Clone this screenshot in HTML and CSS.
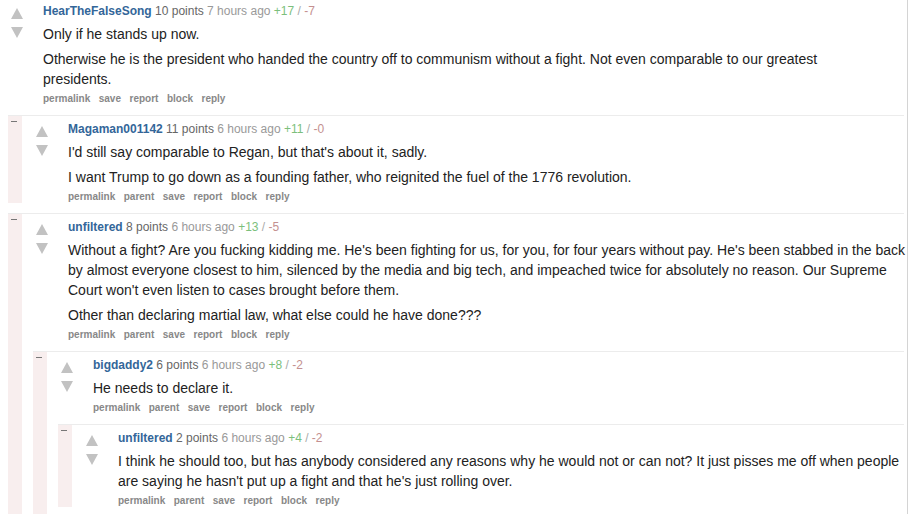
FILE: index.html
```html
<!DOCTYPE html>
<html>
<head>
<meta charset="utf-8">
<link rel="stylesheet" href="styles.css">
</head>
<body>
<div class="page">
  <div class="thread">
    <div class="comment">
      <div class="bar"></div>
      <div class="main">
        <div class="entry">
          <div class="arrows"><span class="up"></span><span class="down"></span></div>
          <div class="content">
            <p class="tagline"><a class="author">HearTheFalseSong</a> <span class="score">10 points</span> <span class="time">7 hours ago</span> <span class="split"><span class="plus">+17</span> / <span class="minus">-7</span></span></p>
            <div class="md">
              <p>Only if he stands up now.</p>
              <p>Otherwise he is the president who handed the country off to communism without a fight. Not even comparable to our greatest presidents.</p>
            </div>
            <ul class="buttons"><li>permalink</li><li>save</li><li>report</li><li>block</li><li>reply</li></ul>
          </div>
        </div>
        <div class="children">
          <div class="comment">
            <div class="bar"></div>
            <div class="main">
              <div class="entry">
                <div class="arrows"><span class="up"></span><span class="down"></span></div>
                <div class="content">
                  <p class="tagline"><a class="author">Magaman001142</a> <span class="score">11 points</span> <span class="time">6 hours ago</span> <span class="split"><span class="plus">+11</span> / <span class="minus">-0</span></span></p>
                  <div class="md">
                    <p>I'd still say comparable to Regan, but that's about it, sadly.</p>
                    <p>I want Trump to go down as a founding father, who reignited the fuel of the 1776 revolution.</p>
                  </div>
                  <ul class="buttons"><li>permalink</li><li>parent</li><li>save</li><li>report</li><li>block</li><li>reply</li></ul>
                </div>
              </div>
            </div>
          </div>
          <div class="comment">
            <div class="bar"></div>
            <div class="main">
              <div class="entry">
                <div class="arrows"><span class="up"></span><span class="down"></span></div>
                <div class="content">
                  <p class="tagline"><a class="author">unfiltered</a> <span class="score">8 points</span> <span class="time">6 hours ago</span> <span class="split"><span class="plus">+13</span> / <span class="minus">-5</span></span></p>
                  <div class="md">
                    <p>Without a fight? Are you fucking kidding me. He's been fighting for us, for you, for four years without pay. He's been stabbed in the back by almost everyone closest to him, silenced by the media and big tech, and impeached twice for absolutely no reason. Our Supreme Court won't even listen to cases brought before them.</p>
                    <p>Other than declaring martial law, what else could he have done???</p>
                  </div>
                  <ul class="buttons"><li>permalink</li><li>parent</li><li>save</li><li>report</li><li>block</li><li>reply</li></ul>
                </div>
              </div>
              <div class="children">
                <div class="comment">
                  <div class="bar"></div>
                  <div class="main">
                    <div class="entry">
                      <div class="arrows"><span class="up"></span><span class="down"></span></div>
                      <div class="content">
                        <p class="tagline"><a class="author">bigdaddy2</a> <span class="score">6 points</span> <span class="time">6 hours ago</span> <span class="split"><span class="plus">+8</span> / <span class="minus">-2</span></span></p>
                        <div class="md">
                          <p>He needs to declare it.</p>
                        </div>
                        <ul class="buttons"><li>permalink</li><li>parent</li><li>save</li><li>report</li><li>block</li><li>reply</li></ul>
                      </div>
                    </div>
                    <div class="children">
                      <div class="comment">
                        <div class="bar"></div>
                        <div class="main">
                          <div class="entry">
                            <div class="arrows"><span class="up"></span><span class="down"></span></div>
                            <div class="content">
                              <p class="tagline"><a class="author">unfiltered</a> <span class="score">2 points</span> <span class="time">6 hours ago</span> <span class="split"><span class="plus">+4</span> / <span class="minus">-2</span></span></p>
                              <div class="md">
                                <p>I think he should too, but has anybody considered any reasons why he would not or can not? It just pisses me off when people are saying he hasn't put up a fight and that he's just rolling over.</p>
                              </div>
                              <ul class="buttons"><li>permalink</li><li>parent</li><li>save</li><li>report</li><li>block</li><li>reply</li></ul>
                            </div>
                          </div>
                        </div>
                      </div>
                    </div>
                  </div>
                </div>
              </div>
            </div>
          </div>
        </div>
      </div>
    </div>
  </div>
</div>
</body>
</html>
```
FILE: styles.css
```css
html, body {
  margin: 0;
  padding: 0;
  overflow: hidden;
  background: #fff;
  height: 514px;
}
body {
  font-family: "Liberation Sans", Arial, sans-serif;
  color: #222;
}
.page {
  width: 908px;
  height: 514px;
  box-sizing: border-box;
  padding-right: 3px;
  border-right: 1px solid #d4d4d4;
  overflow: hidden;
}
.thread {
  margin-left: -17px;
  margin-top: -3px;
}
.comment {
  display: flex;
  border-top: 1px solid #ececec;
  margin-bottom: 10px;
}
.bar {
  position: relative;
  flex: 0 0 14px;
  background: #f8eeee;
}
.bar::before {
  content: "";
  position: absolute;
  left: 3px;
  top: 5px;
  width: 6px;
  height: 1px;
  background: #777;
}
.main {
  flex: 1;
  min-width: 0;
}
.entry {
  display: flex;
  padding: 5px 0 0 14px;
}
.arrows {
  flex: 0 0 13px;
  margin-right: 19px;
  display: flex;
  flex-direction: column;
  padding-top: 5px;
}
.up, .down {
  display: block;
  width: 0;
  height: 0;
  border-left: 6.5px solid transparent;
  border-right: 6.5px solid transparent;
}
.up {
  border-bottom: 11px solid #c2c2c2;
}
.down {
  margin-top: 8px;
  border-top: 11px solid #c2c2c2;
}
.content {
  flex: 1;
  min-width: 0;
}
.tagline {
  margin: 0 0 5px;
  font-size: 12px;
  line-height: 16px;
  color: #888;
}
.author {
  font-weight: bold;
  color: #336699;
}
.score {
  color: #666;
}
.time {
  color: #999;
}
.split {
  color: #aaa;
}
.plus {
  color: #7cbf7c;
}
.minus {
  color: #c49090;
}
.md {
  max-width: 840px;
  margin-right: -4px;
  font-size: 14px;
  line-height: 20px;
  color: #222;
}
.md p {
  margin: 0 0 5px;
}
.md p:last-child {
  margin-bottom: 4px;
}
.buttons {
  display: flex;
  gap: 8.5px;
  list-style: none;
  margin: 0;
  padding: 0;
  font-size: 10px;
  line-height: 12px;
  font-weight: bold;
  color: #888;
}
.children {
  margin: 10px 0 0 11px;
}
```
